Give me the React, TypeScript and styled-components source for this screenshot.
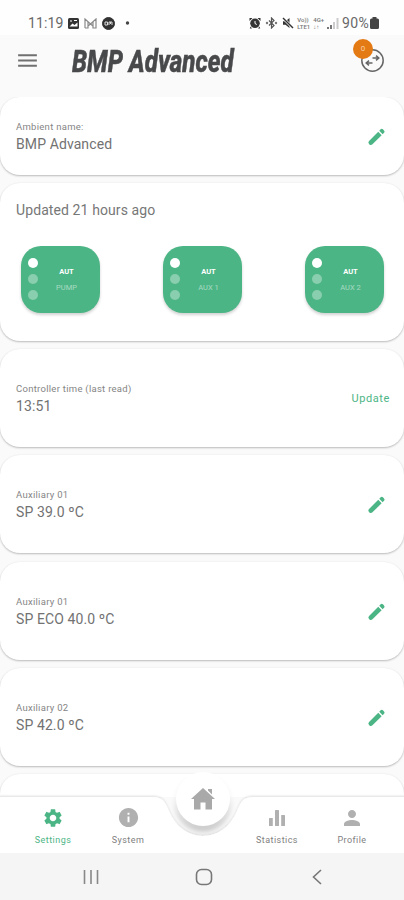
import React from "react";
import styled, { createGlobalStyle } from "styled-components";
import { MdSettings, MdInfo, MdPerson, MdMenu } from "react-icons/md";

const GREEN = "#4cb585";

const GlobalStyle = createGlobalStyle`
  * { box-sizing: border-box; }
  body { margin: 0; background: #fafafa; font-family: Roboto, "Liberation Sans", sans-serif; }
`;

const Screen = styled.div`
  width: 404px;
  height: 900px;
  display: flex;
  flex-direction: column;
  overflow: hidden;
  background: #fafafa;
`;

const StatusBar = styled.div`
  height: 35px;
  flex: none;
  display: flex;
  align-items: center;
  justify-content: space-between;
  padding: 11px 25px 0 28px;
  background: #fefefe;
  color: #555;
`;

const StatusGroup = styled.div<{ $gap: number }>`
  display: flex;
  align-items: center;
  gap: ${(p) => p.$gap}px;
  svg { display: block; }
`;

const StatusText = styled.span<{ $spacing: number }>`
  font-size: 14px;
  line-height: 16px;
  letter-spacing: ${(p) => p.$spacing}px;
  color: #686868;
`;

const TinyStack = styled.span`
  display: flex;
  flex-direction: column;
  font-size: 6px;
  line-height: 7px;
  font-weight: 500;
  color: #777;
`;

const Header = styled.header`
  height: 62px;
  flex: none;
  display: flex;
  align-items: flex-start;
  padding: 13px 19px 0 15px;
  color: #707070;
`;

const Title = styled.h1`
  margin: -5px auto 0 32px;
  width: 162px;
  font-size: 32px;
  line-height: 36px;
  font-weight: 800;
  font-style: italic;
  color: #48494b;
  white-space: nowrap;
  -webkit-text-stroke: 0.5px #48494b;
  transform: scaleX(0.757);
  transform-origin: 0 50%;
`;

const Sync = styled.div`
  position: relative;
  width: 25px;
  height: 25px;
  svg { display: block; }
`;

const Badge = styled.span`
  position: absolute;
  left: -7px;
  top: -9px;
  width: 20px;
  height: 20px;
  border-radius: 50%;
  background: #e47a13;
  color: #f9cfa3;
  font-size: 8px;
  line-height: 20px;
  text-align: center;
`;

const Content = styled.main`
  flex: 1;
  min-height: 0;
  overflow: hidden;
  display: flex;
  flex-direction: column;
  gap: 8.15px;
`;

const Card = styled.section<{ $height: number }>`
  flex: none;
  height: ${(p) => p.$height}px;
  border-radius: 20px;
  background: #fff;
  box-shadow: 0 1px 2px rgba(0, 0, 0, 0.24), 0 0 3px rgba(0, 0, 0, 0.04);
`;

const FieldCard = styled(Card)`
  display: flex;
  align-items: center;
  justify-content: space-between;
  padding: 0 16px;
`;

const Field = styled.div`
  display: flex;
  flex-direction: column;
  padding-top: 2px;
`;

const Label = styled.span`
  font-size: 9.5px;
  line-height: 14px;
  letter-spacing: 0.28px;
  color: #858585;
`;

const Value = styled.span`
  font-size: 14px;
  line-height: 20px;
  letter-spacing: 0.1px;
  color: #727272;
`;

const UpdateButton = styled.button`
  border: 0;
  padding: 0;
  margin: 1px -2px 0 0;
  background: none;
  font-family: inherit;
  font-size: 11px;
  letter-spacing: 0.6px;
  color: ${GREEN};
`;

const StatusCard = styled(Card)`
  padding: 17px 20px 0 21px;
`;

const Updated = styled.p`
  margin: 0 0 0 -5px;
  font-size: 14px;
  line-height: 20px;
  letter-spacing: 0.1px;
  color: #777;
`;

const Relays = styled.div`
  display: flex;
  justify-content: space-between;
  margin-top: 26px;
`;

const Relay = styled.div`
  width: 79px;
  height: 67px;
  display: flex;
  align-items: center;
  padding-left: 7px;
  border-radius: 20px;
  background: ${GREEN};
  box-shadow: 0 2px 3px rgba(0, 0, 0, 0.18);
`;

const Lamps = styled.div`
  display: flex;
  flex-direction: column;
  gap: 6px;
  margin-top: -1px;
`;

const Lamp = styled.i<{ $on?: boolean }>`
  width: 10px;
  height: 10px;
  border-radius: 50%;
  background: ${(p) => (p.$on ? "#fff" : "rgba(255,255,255,.34)")};
`;

const RelayText = styled.div`
  width: 57px;
  display: flex;
  flex-direction: column;
  text-align: center;
  font-size: 7.5px;
  line-height: 16px;
  color: rgba(255, 255, 255, 0.5);
  strong { color: #fff; font-weight: 700; }
`;

const BottomBar = styled.nav`
  position: relative;
  z-index: 1;
  flex: none;
  height: 56px;
`;

const BarShape = styled.svg`
  position: absolute;
  left: 0;
  top: -20px;
  display: block;
`;

const Tabs = styled.div`
  position: relative;
  height: 56px;
  display: grid;
  grid-template-columns: 75px 75px 74px 75px 75px;
  padding-left: 15.5px;
`;

const Tab = styled.div<{ $active?: boolean }>`
  display: grid;
  grid-template-rows: 23px 12px;
  row-gap: 5px;
  align-content: start;
  place-items: center;
  padding-top: 9px;
  color: ${(p) => (p.$active ? GREEN : "#b0b0b0")};
  svg { display: block; }
  span {
    font-size: 9px;
    line-height: 12px;
    letter-spacing: 0.45px;
    color: ${(p) => (p.$active ? GREEN : "#808080")};
  }
`;

const HomeButton = styled.div`
  position: absolute;
  left: 176px;
  top: -25px;
  width: 54px;
  height: 54px;
  border-radius: 50%;
  display: grid;
  place-items: center;
  background: #fff;
`;

const SystemBar = styled.footer`
  flex: none;
  height: 47px;
  display: grid;
  grid-template-columns: repeat(3, 113px);
  justify-content: center;
  place-items: center;
  padding-left: 4px;
  background: #f5f5f5;
`;

const Pencil = () => (
  <svg width="22" height="22" viewBox="0 0 22 22" fill={GREEN}>
    <g transform="translate(3.2 19.2) rotate(-45)">
      <path d="M2.200-2.400H15.200V2.400H2.200Q0 2.400 0 0T2.200-2.400Z" />
      <path d="M16.600-2.400H18.600Q20.200-2.400 20.200-.8V.8Q20.200 2.400 18.600 2.400H16.600Z" />
    </g>
  </svg>
);

const SyncIcon = () => (
  <svg width="25" height="25" viewBox="0 0 25 25" fill="none" stroke="#666" strokeWidth="1.5">
    <circle cx="12.5" cy="12.5" r="10.7" />
    <path d="M12.500 10h6M16 7.600l2.800 2.400-2.800 2.400M12.500 15h-6M9 12.600l-2.800 2.400 2.800 2.400" />
  </svg>
);

const HomeIcon = () => (
  <svg width="26" height="24" viewBox="0 0 26 24" fill="#a9a9a9">
    <path d="M13 1 1 12h3v10.500h6.500v-7h5v7H22V12h3ZM18 2h4v5.500l-4-4Z" />
  </svg>
);

const StatsIcon = () => (
  <svg width="22" height="22" viewBox="0 0 22 22" fill="currentColor">
    <rect x="3" y="11" width="3.8" height="8" rx="0.5" />
    <rect x="9" y="3" width="4" height="16" rx="0.5" />
    <rect x="15.2" y="8" width="3.8" height="11" rx="0.5" />
  </svg>
);

const GalleryIcon = () => (
  <svg width="11" height="11" viewBox="0 0 11 11">
    <rect width="11" height="11" rx="1.5" fill="#333" />
    <path d="m1.500 8.500 3-3 2 1.500 3-2.500v4Z" fill="#fff" />
    <path d="M2 3h2M6 2.500h3" stroke="#fff" />
  </svg>
);

const MailIcon = () => (
  <svg width="13" height="11" viewBox="0 0 13 11" fill="none" stroke="#888" strokeWidth="1.2">
    <path d="M1 10V1l5.500 5L12 1v9H9V4M4 4v6H1M4 8l2.500-2L9 8" />
  </svg>
);

const ChatIcon = () => (
  <svg width="13" height="13" viewBox="0 0 13 13" fill="none" stroke="#ddd">
    <circle cx="6.5" cy="6.5" r="6" fill="#333" stroke="#333" />
    <path d="M3 8V5h2.500v3H3M7 8V5h3v3M8.500 5v2" />
  </svg>
);

const AlarmIcon = () => (
  <svg width="12" height="12" viewBox="0 0 12 12" fill="#333">
    <path d="M.5 1h3L.5 4ZM11.500 1h-3l3 3ZM1.500 9.500 3 11.500H.8ZM10.500 9.500 9 11.500h2.200Z" />
    <circle cx="6" cy="6.300" r="4.800" />
    <path d="M6 4v2.500l1.800 1" fill="none" stroke="#fff" />
  </svg>
);

const BluetoothIcon = () => (
  <svg width="13" height="12" viewBox="0 0 13 12" fill="#777">
    <circle cx="2" cy="6" r="1.2" />
    <circle cx="11" cy="6" r="1.2" />
    <path d="m4 3.500 5 5L6.500 11V1L9 3.500l-5 5" fill="none" stroke="#555" strokeWidth="1.2" />
  </svg>
);

const MuteIcon = () => (
  <svg width="12" height="12" viewBox="0 0 12 12" fill="#333">
    <path d="M1 4.200h2.500L7.500 1v10L3.500 7.800H1Z" />
    <path d="m1 1 10 10" stroke="#fff" strokeWidth="2.600" />
    <path d="m1 1 10 10" stroke="#333" strokeWidth="1.400" />
  </svg>
);

const SignalIcon = () => (
  <svg width="12" height="11" viewBox="0 0 12 11" fill="#777">
    <path d="M0 9h2v2H0ZM3 7h2v4H3Z" />
    <path d="M6 4h2v7H6ZM9.500 0h2v11h-2Z" fill="#ccc" />
  </svg>
);

const BatteryIcon = () => (
  <svg width="9" height="12" viewBox="0 0 9 12" fill="#444">
    <path d="M2.500 0h4v1.500h1q1.500 0 1.500 1.500v7.500q0 1.500-1.500 1.500h-6Q0 12 0 10.500V3q0-1.500 1.500-1.500h1Z" />
  </svg>
);

const fields = [
  { label: "Auxiliary 01", value: "SP 39.0 ºC" },
  { label: "Auxiliary 01", value: "SP ECO 40.0 ºC" },
  { label: "Auxiliary 02", value: "SP 42.0 ºC" },
];

export default function App() {
  return (
    <Screen>
      <GlobalStyle />
      <StatusBar>
        <StatusGroup $gap={5}>
          <StatusText $spacing={0.1}>11:19</StatusText>
          <StatusGroup $gap={5}>
            <GalleryIcon />
            <MailIcon />
            <ChatIcon />
          </StatusGroup>
          <svg width="12" height="4" viewBox="0 0 12 4"><circle cx="7.5" cy="2" r="1.7" fill="#444" /></svg>
        </StatusGroup>
        <StatusGroup $gap={3}>
          <StatusGroup $gap={4}>
            <AlarmIcon />
            <BluetoothIcon />
            <MuteIcon />
          </StatusGroup>
          <TinyStack><span>Vo))</span><span>LTE1</span></TinyStack>
          <TinyStack><span>4G+</span><span>↓↑</span></TinyStack>
          <SignalIcon />
          <StatusGroup $gap={1}>
            <StatusText $spacing={0.3}>90%</StatusText>
            <BatteryIcon />
          </StatusGroup>
        </StatusGroup>
      </StatusBar>
      <Header>
        <MdMenu size={25} />
        <Title>BMP Advanced</Title>
        <Sync>
          <SyncIcon />
          <Badge>0</Badge>
        </Sync>
      </Header>
      <Content>
        <FieldCard $height={78}>
          <Field>
            <Label>Ambient name:</Label>
            <Value>BMP Advanced</Value>
          </Field>
          <Pencil />
        </FieldCard>
        <StatusCard $height={158}>
          <Updated>Updated 21 hours ago</Updated>
          <Relays>
            {["PUMP", "AUX 1", "AUX 2"].map((name) => (
              <Relay key={name}>
                <Lamps><Lamp $on /><Lamp /><Lamp /></Lamps>
                <RelayText><strong>AUT</strong><span>{name}</span></RelayText>
              </Relay>
            ))}
          </Relays>
        </StatusCard>
        <FieldCard $height={98}>
          <Field>
            <Label>Controller time (last read)</Label>
            <Value>13:51</Value>
          </Field>
          <UpdateButton>Update</UpdateButton>
        </FieldCard>
        {fields.map((f) => (
          <FieldCard $height={98} key={f.value}>
            <Field>
              <Label>{f.label}</Label>
              <Value>{f.value}</Value>
            </Field>
            <Pencil />
          </FieldCard>
        ))}
        <Card $height={98} />
      </Content>
      <BottomBar>
        <BarShape width="404" height="76" viewBox="0 0 404 76">
          <defs>
            <filter id="edge" x="-5%" y="-20%" width="110%" height="140%">
              <feDropShadow dx="0" dy="-1" stdDeviation="1.3" floodOpacity="0.13" />
            </filter>
            <filter id="glow" x="-20%" y="-20%" width="140%" height="150%">
              <feGaussianBlur stdDeviation="2" />
            </filter>
            <linearGradient id="fade" x1="0" y1="0" x2="0" y2="1">
              <stop offset="0.4" stopOpacity="0.03" />
              <stop offset="1" stopOpacity="0.2" />
            </linearGradient>
          </defs>
          <circle cx="203" cy="26" r="29" fill="url(#fade)" filter="url(#glow)" />
          <path
            d="M-6 20H153C163 20 165 25 169 34C176 50 188 59 203 59S230 50 237 34C241 25 243 20 253 20H410V84H-6Z"
            fill="#fff"
            filter="url(#edge)"
          />
        </BarShape>
        <Tabs>
          <Tab $active><MdSettings size={22} /><span>Settings</span></Tab>
          <Tab><MdInfo size={23} /><span>System</span></Tab>
          <div />
          <Tab><StatsIcon /><span>Statistics</span></Tab>
          <Tab><MdPerson size={24} /><span>Profile</span></Tab>
        </Tabs>
        <HomeButton><HomeIcon /></HomeButton>
      </BottomBar>
      <SystemBar>
        <svg width="16" height="16" viewBox="0 0 16 16" stroke="#888" strokeWidth="1.6">
          <path d="M1.500 1v14M8 1v14M14.500 1v14" />
        </svg>
        <svg width="18" height="18" viewBox="0 0 18 18" fill="none" stroke="#777" strokeWidth="1.6">
          <rect x="1.5" y="1.5" width="15" height="15" rx="5" />
        </svg>
        <svg width="12" height="16" viewBox="0 0 12 16" fill="none" stroke="#777" strokeWidth="1.6">
          <path d="M10 1 2.500 8l7.500 7" />
        </svg>
      </SystemBar>
    </Screen>
  );
}
